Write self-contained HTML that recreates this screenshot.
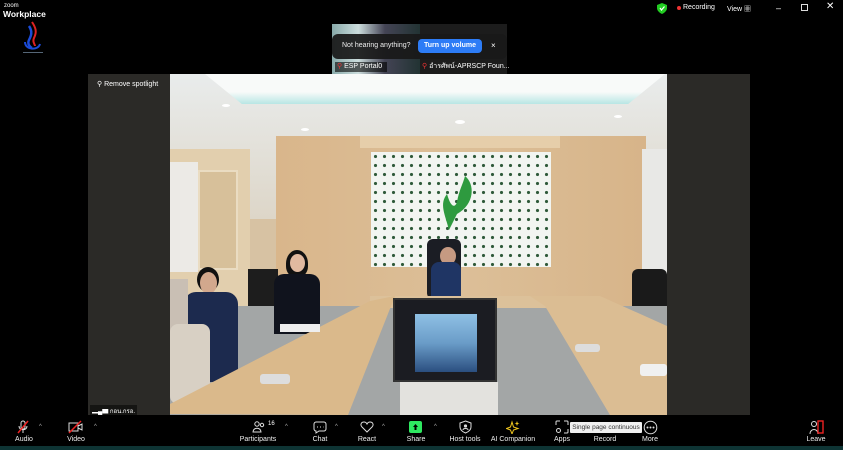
<!DOCTYPE html>
<html><head><meta charset="utf-8"><style>
*{margin:0;padding:0;box-sizing:border-box}
body{width:843px;height:450px;background:#000;position:relative;overflow:hidden;font-family:"Liberation Sans","Noto Sans CJK SC",sans-serif;color:#fff}
.a{position:absolute}
.lbl{position:absolute;top:436px;font-size:7px;color:#eee;text-align:center;width:60px;margin-left:-30px}
.ic{position:absolute;top:420px}
.car{position:absolute;top:424px;font-size:6px;color:#aaa}
</style></head><body>
<div class="a" style="left:4px;top:3px;font-size:6px;line-height:6px">zoom</div>
<div class="a" style="left:3px;top:9px;font-size:8.5px;font-weight:bold">Workplace</div>
<svg class="a" style="left:18px;top:20px" width="30" height="36" viewBox="0 0 30 36">
<path d="M14 2 C18 8 19 12 16 18 C14 22 17 24 17 26" stroke="#d22" stroke-width="2" fill="none"/>
<path d="M11 6 C15 12 13 16 11 20 C9 24 12 27 14 28" stroke="#1b4bd8" stroke-width="2.5" fill="none"/>
<path d="M7 22 C7 30 20 31 22 24" stroke="#1b4bd8" stroke-width="2" fill="none"/>
<rect x="5" y="32" width="20" height="1" fill="#567"/>
</svg>
<svg class="a" style="left:657px;top:3px" width="10" height="11" viewBox="0 0 10 11"><path d="M5 0 L10 2 V5 C10 8 7 10 5 11 C3 10 0 8 0 5 V2Z" fill="#2c2"/><path d="M3 5 L4.5 7 L7.5 3.5" stroke="#fff" stroke-width="1.2" fill="none"/></svg>
<div class="a" style="left:677px;top:6px;width:4px;height:4px;border-radius:50%;background:#e33"></div>
<div class="a" style="left:683px;top:4px;font-size:7px">Recording</div>
<div class="a" style="left:727px;top:4px;font-size:7px">View ▦</div>
<div class="a" style="left:776px;top:3px;font-size:9px">–</div>
<div class="a" style="left:801px;top:4px;width:7px;height:7px;border:1px solid #ddd"></div>
<div class="a" style="left:826px;top:1px;font-size:10px">✕</div>
<div class="a" style="left:332px;top:24px;width:88px;height:50px;background:linear-gradient(90deg,#8aa 0,#cdd 30%,#445 60%,#233 100%)"></div>
<div class="a" style="left:420px;top:24px;width:87px;height:50px;background:#1c1c1c"></div>
<div class="a" style="left:332px;top:34px;width:175px;height:25px;background:rgba(25,25,25,.93);border-radius:6px"></div>
<div class="a" style="left:342px;top:42px;font-size:7px;color:#eee">Not hearing anything?</div>
<div class="a" style="left:418px;top:39px;width:64px;height:14px;background:#2d7cf6;border-radius:4px;font-size:7px;font-weight:bold;text-align:center;line-height:14px">Turn up volume</div>
<div class="a" style="left:491px;top:41px;font-size:8px">×</div>
<div class="a" style="left:335px;top:62px;width:52px;height:10px;background:rgba(0,0,0,.6);font-size:7px;line-height:10px;padding-left:2px"><span style="color:#e33">⚲</span> ESP Portal0</div>
<div class="a" style="left:422px;top:62px;font-size:7px;line-height:10px"><span style="color:#e33">⚲</span> อำรศัพน์-APRSCP Foun...</div>
<div class="a" style="left:88px;top:74px;width:662px;height:341px;background:#2b2a27"></div>
<div class="a" style="left:97px;top:80px;font-size:7px">⚲ Remove spotlight</div>
<div class="a" style="left:90px;top:405px;font-size:6px;background:rgba(0,0,0,.5);padding:1px 2px">▂▄▆ กอน.กรอ.</div>
<div class="a" style="left:170px;top:74px;width:497px;height:341px;overflow:hidden;background:#d7c2a3">
  <div class="a" style="left:0;top:0;width:497px;height:145px;background:linear-gradient(#e9ecec,#ddd6c8)"></div>
  <div class="a" style="left:35px;top:0;width:460px;height:30px;background:linear-gradient(#f8faf9 60%,#b8e6e4);clip-path:polygon(0 0,100% 0,92% 100%,8% 100%)"></div>
  <div class="a" style="left:52px;top:30px;width:8px;height:3px;background:#fff;border-radius:50%"></div>
  <div class="a" style="left:131px;top:54px;width:8px;height:3px;background:#fff;border-radius:50%"></div>
  <div class="a" style="left:285px;top:46px;width:10px;height:4px;background:#fff;border-radius:50%"></div>
  <div class="a" style="left:444px;top:41px;width:8px;height:3px;background:#fff;border-radius:50%"></div>
  <div class="a" style="left:0;top:75px;width:80px;height:160px;background:#e2cfae"></div>
  <div class="a" style="left:28px;top:96px;width:40px;height:100px;background:#d7c09a;border:2px solid #eadcc2"></div>
  <div class="a" style="left:0;top:88px;width:28px;height:110px;background:#eceae6"></div>
  <div class="a" style="left:106px;top:62px;width:370px;height:170px;background:linear-gradient(90deg,#d9b68b,#dcbf98 50%,#d7b489)"></div>
  <div class="a" style="left:190px;top:62px;width:200px;height:12px;background:#e6ceaa"></div>
  <div class="a" style="left:201px;top:78px;width:180px;height:115px;background:#f2f5f1;background-image:radial-gradient(circle,#2f5a3a 1.4px,transparent 1.8px);background-size:9px 9px"></div>
  <svg class="a" style="left:265px;top:100px" width="45" height="58" viewBox="0 0 45 58"><path d="M30 2 C40 10 40 30 22 40 L14 56 C10 40 4 30 12 20 C16 34 20 34 22 28 C24 16 28 10 30 2Z" fill="#2e9a3f"/></svg>
  <div class="a" style="left:472px;top:75px;width:25px;height:150px;background:#e8e8e6"></div>
  <div class="a" style="left:257px;top:165px;width:34px;height:60px;background:#1b1d24;border-radius:6px"></div>
  <div class="a" style="left:270px;top:173px;width:16px;height:18px;background:#c69a82;border-radius:50%"></div>
  <div class="a" style="left:261px;top:188px;width:30px;height:36px;background:#1f3564;border-radius:8px 8px 0 0"></div>
  <div class="a" style="left:462px;top:195px;width:35px;height:65px;background:#1a1a1a;border-radius:6px"></div>
  <div class="a" style="left:78px;top:195px;width:30px;height:45px;background:#1d1d1d"></div>
  <!-- floor -->
  <div class="a" style="left:0;top:232px;width:497px;height:109px;background:#a3a6a6"></div>
  <!-- back table -->
  <div class="a" style="left:200px;top:222px;width:220px;height:12px;background:#dcc19a"></div>
  <!-- people seated -->
  <div class="a" style="left:116px;top:176px;width:22px;height:27px;background:#111;border-radius:50% 50% 40% 40%"></div>
  <div class="a" style="left:120px;top:180px;width:15px;height:18px;background:#e0b9a0;border-radius:50%"></div>
  <div class="a" style="left:104px;top:200px;width:46px;height:60px;background:#10131d;border-radius:10px 10px 0 0"></div>
  <div class="a" style="left:27px;top:193px;width:22px;height:25px;background:#111;border-radius:50%"></div>
  <div class="a" style="left:30px;top:198px;width:17px;height:22px;background:#d2a88d;border-radius:50%"></div>
  <div class="a" style="left:14px;top:218px;width:54px;height:90px;background:#1c2a4e;border-radius:12px 12px 0 0"></div>
  <div class="a" style="left:0;top:205px;width:18px;height:60px;background:#c9bfb4"></div>
  <div class="a" style="left:0;top:250px;width:40px;height:80px;background:#d8d0c4;border-radius:8px"></div>
  <!-- left table -->
  <div class="a" style="left:0;top:222px;width:260px;height:119px;background:#dab98b;clip-path:polygon(0 118px,0 108px,200px 5px,225px 0,178px 119px)"></div>
  <!-- right table -->
  <div class="a" style="left:340px;top:222px;width:157px;height:119px;background:#dbbd93;clip-path:polygon(20px 0,90px 0,157px 30px,157px 119px,100px 119px,35px 10px)"></div>
  <!-- monitor -->
  <div class="a" style="left:223px;top:224px;width:104px;height:84px;background:#1b1c22;border:2px solid #333"></div>
  <div class="a" style="left:245px;top:240px;width:62px;height:58px;background:linear-gradient(#8fc0e4,#6a9cc8 50%,#2b4f80)"></div>
  <div class="a" style="left:230px;top:308px;width:98px;height:33px;background:#e3e2de"></div>
  <div class="a" style="left:90px;top:300px;width:30px;height:10px;background:#ddd;border-radius:3px"></div>
  <div class="a" style="left:110px;top:250px;width:40px;height:8px;background:#eee"></div>
  <div class="a" style="left:470px;top:290px;width:27px;height:12px;background:#f0f0f0;border-radius:3px"></div>
  <div class="a" style="left:405px;top:270px;width:25px;height:8px;background:#ddd;border-radius:3px"></div>
</div>
<div class="a" style="left:0;top:446px;width:843px;height:4px;background:#0e3434"></div>
<svg class="ic" style="left:16px" width="14" height="14" viewBox="0 0 14 14"><rect x="5" y="1" width="4" height="8" rx="2" fill="none" stroke="#ddd"/><path d="M3 6 C3 11 11 11 11 6 M7 10 V13" stroke="#ddd" fill="none"/><path d="M2 13 L12 1" stroke="#e22" stroke-width="1.5"/></svg>
<div class="car" style="left:39px">^</div>
<div class="lbl" style="left:24px">Audio</div>
<svg class="ic" style="left:68px" width="15" height="14" viewBox="0 0 15 14"><rect x="1" y="3" width="9" height="8" fill="none" stroke="#ddd"/><path d="M10 6 L14 4 V10 L10 8" fill="none" stroke="#ddd"/><path d="M1 13 L13 1" stroke="#e22" stroke-width="1.5"/></svg>
<div class="car" style="left:94px">^</div>
<div class="lbl" style="left:76px">Video</div>
<svg class="ic" style="left:252px" width="14" height="14" viewBox="0 0 14 14"><circle cx="5" cy="4" r="2.2" fill="none" stroke="#ddd"/><path d="M1 12 C1 7 9 7 9 12Z" fill="none" stroke="#ddd"/><circle cx="10" cy="5" r="1.7" fill="none" stroke="#ddd"/></svg>
<div class="a" style="left:268px;top:421px;font-size:6px">16</div>
<div class="car" style="left:285px">^</div>
<div class="lbl" style="left:258px">Participants</div>
<svg class="ic" style="left:313px" width="14" height="14" viewBox="0 0 14 14"><path d="M3 2 H11 C12 2 13 3 13 4 V9 C13 10 12 11 11 11 H6 L3 13 V11 C2 11 1 10 1 9 V4 C1 3 2 2 3 2Z" fill="none" stroke="#ddd"/><path d="M4 7 H5 M7 7 H8 M10 7 H10.5" stroke="#ddd"/></svg>
<div class="car" style="left:335px">^</div>
<div class="lbl" style="left:320px">Chat</div>
<svg class="ic" style="left:360px" width="14" height="14" viewBox="0 0 14 14"><path d="M7 12 L2 7 C0 5 1 2 4 2 C5.5 2 6.5 3 7 4 C7.5 3 8.5 2 10 2 C13 2 14 5 12 7Z" fill="none" stroke="#ddd"/></svg>
<div class="car" style="left:382px">^</div>
<div class="lbl" style="left:367px">React</div>
<div class="ic" style="left:409px;top:421px;width:13px;height:12px;background:#2ee860;border-radius:2px"></div>
<svg class="ic" style="left:409px;top:421px" width="13" height="12" viewBox="0 0 13 12"><path d="M6.5 3 L9 6 H7.5 V9 H5.5 V6 H4Z" fill="#000"/></svg>
<div class="car" style="left:434px">^</div>
<div class="lbl" style="left:416px">Share</div>
<svg class="ic" style="left:459px" width="13" height="14" viewBox="0 0 13 14"><path d="M6.5 1 L12 3 V7 C12 10 9 12 6.5 13 C4 12 1 10 1 7 V3Z" fill="none" stroke="#ddd"/><circle cx="6.5" cy="6" r="1.6" fill="#ddd"/><path d="M4 10 C4 8 9 8 9 10" stroke="#ddd" fill="none"/></svg>
<div class="lbl" style="left:465px">Host tools</div>
<svg class="ic" style="left:506px" width="14" height="14" viewBox="0 0 14 14"><path d="M6 2 L7.5 7 L12 8.5 L7.5 10 L6 14 L4.5 10 L0.5 8.5 L4.5 7Z" fill="none" stroke="#f2c81f"/><path d="M11 1 L11.7 3 L13.5 3.5 L11.7 4 L11 6 L10.3 4 L8.5 3.5 L10.3 3Z" fill="#f2c81f"/></svg>
<div class="lbl" style="left:513px">AI Companion</div>
<svg class="ic" style="left:555px" width="14" height="14" viewBox="0 0 14 14"><path d="M1 5 V2 C1 1.5 1.5 1 2 1 H5 M9 1 H12 C12.5 1 13 1.5 13 2 V5" stroke="#ddd" fill="none"/><circle cx="3.5" cy="10.5" r="2" fill="none" stroke="#ddd"/><path d="M9 13 H12 C12.5 13 13 12.5 13 12 V9" stroke="#ddd" fill="none"/></svg>
<div class="lbl" style="left:562px">Apps</div>
<div class="a" style="left:570px;top:422px;width:72px;height:11px;background:#f0f0f0;color:#333;font-size:6.5px;line-height:11px;text-align:center;border-radius:1px">Single page continuous</div>
<div class="lbl" style="left:605px">Record</div>
<svg class="ic" style="left:643px" width="15" height="15" viewBox="0 0 15 15"><circle cx="7.5" cy="7.5" r="6.3" fill="none" stroke="#ddd"/><circle cx="4.5" cy="7.5" r="1" fill="#ddd"/><circle cx="7.5" cy="7.5" r="1" fill="#ddd"/><circle cx="10.5" cy="7.5" r="1" fill="#ddd"/></svg>
<div class="lbl" style="left:650px">More</div>
<svg class="ic" style="left:808px" width="16" height="15" viewBox="0 0 16 15"><circle cx="6" cy="4" r="2.5" fill="none" stroke="#ddd"/><path d="M2 14 C2 8 10 8 10 14" fill="none" stroke="#ddd"/><rect x="10" y="1" width="5" height="12" fill="none" stroke="#e22" stroke-width="1.4"/></svg>
<div class="lbl" style="left:816px">Leave</div>
</body></html>
